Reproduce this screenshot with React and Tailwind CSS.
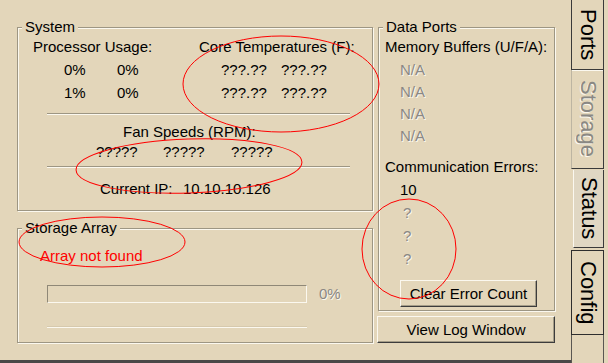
import React from "react";

const dim = "text-[#8a8884] [text-shadow:1px_1px_0_#fbf8ef]";

function Group({ title, className, children }) {
  return (
    <fieldset
      className={`border border-[#9d9683] shadow-[inset_1px_1px_0_#fbf8ef,1px_1px_0_#fbf8ef] ${className}`}
    >
      <legend className="ml-[4px] px-[3px] leading-[18px] bg-[#e3d6ba]">{title}</legend>
      {children}
    </fieldset>
  );
}

function Separator({ className }) {
  return <div className={`h-px bg-[#9d9683] shadow-[0_1px_0_#fbf8ef] ${className}`} />;
}

function Button({ children, className }) {
  return (
    <button
      type="button"
      className={`flex items-center justify-center border border-t-[#fbf8ef] border-l-[#fbf8ef] border-r-[#3c3c3c] border-b-[#3c3c3c] shadow-[inset_-1px_-1px_0_#a59d88] text-[15px] leading-none ${className}`}
    >
      {children}
    </button>
  );
}

export default function App() {
  const cpu = [
    ["0%", "0%"],
    ["1%", "0%"],
  ];
  const temps = [
    ["???.??", "???.??"],
    ["???.??", "???.??"],
  ];

  return (
    <div className="relative w-[608px] h-[363px] flex overflow-hidden bg-[#e3d6ba] text-black text-[15px] font-['Liberation_Sans',Arial,sans-serif]">
      {/* page */}
      <div className="w-[571px] h-full flex gap-[4px] pl-[17px] pt-[18px] border-b-[3px] border-[#4a4847]">
        {/* left column */}
        <div className="w-[356px] flex flex-col gap-[8px]">
          <Group title="System" className="h-[193px]">
            <div className="flex pl-[15px] leading-[22px]">
              <div className="w-[166px]">
                <div>Processor Usage:</div>
                {cpu.map((row, i) => (
                  <div key={i} className="flex pl-[31px] mt-px">
                    <span className="w-[53px]">{row[0]}</span>
                    <span>{row[1]}</span>
                  </div>
                ))}
              </div>
              <div>
                <div>Core Temperatures (F):</div>
                {temps.map((row, i) => (
                  <div key={i} className="flex pl-[22px] mt-px">
                    <span className="w-[60px]">{row[0]}</span>
                    <span>{row[1]}</span>
                  </div>
                ))}
              </div>
            </div>
            <Separator className="ml-[29px] w-[303px] mt-[9px]" />
            <div className="h-[19px] leading-[19px] mt-[8px] pl-[105px]">Fan Speeds (RPM):</div>
            <div className="flex leading-[22px] pl-[78px]">
              <span className="w-[67px]">?????</span>
              <span className="w-[68px]">?????</span>
              <span>?????</span>
            </div>
            <Separator className="ml-[29px] w-[303px] mt-[3px]" />
            <div className="flex leading-[22px] mt-[11px] pl-[82px]">
              <span className="w-[83px]">Current IP:</span>
              <span>10.10.10.126</span>
            </div>
          </Group>

          <Group title="Storage Array" className="h-[124px]">
            <div className="leading-[22px] mt-[8px] pl-[22px] text-[#ff0000]">Array not found</div>
            <div className="flex items-center mt-[18px] pl-[29px]">
              <div className="w-[260px] h-[18px] border border-t-[#8f8877] border-l-[#8f8877] border-b-[#fbf8ef] border-r-[#fbf8ef]" />
              <span className={`ml-[12px] leading-[18px] ${dim}`}>0%</span>
            </div>
            <div className="ml-[29px] mt-[24px] w-[260px] h-px bg-[#fbf8ef] shadow-[0_-1px_0_#d6c9ad]" />
          </Group>
        </div>

        {/* right column */}
        <div className="w-[178px] flex flex-col">
          <Group title="Data Ports" className="ml-[1px] w-[177px] h-[293px]">
            <div className="pl-[6px] leading-[22px]">
              <div>Memory Buffers (U/F/A):</div>
              {[0, 1, 2, 3].map((i) => (
                <div key={i} className={`pl-[15px] mt-px h-[21px] ${dim}`}>N/A</div>
              ))}
              <div className="mt-[10px]">Communication Errors:</div>
              <div className="pl-[15px] mt-px">10</div>
              {[0, 1, 2].map((i) => (
                <div key={i} className={`pl-[18px] h-[23px] leading-[23px] ${dim}`}>?</div>
              ))}
            </div>
            <Button className="ml-[21px] mt-[10px] w-[137px] h-[27px]">Clear Error Count</Button>
          </Group>
          <Button className="mt-[5px] w-[178px] h-[27px]">View Log Window</Button>
        </div>
      </div>

      {/* tabs */}
      <div className="w-[37px] h-full flex flex-col text-[22px] leading-none">
        <div className="w-[33px] h-[70px] flex items-center justify-center border-l border-r border-b border-[#3a3a3a] shadow-[0_1px_0_#fbf8ef]">
          <span className="[writing-mode:vertical-rl]">Ports</span>
        </div>
        <div className="w-[33px] h-[99px] flex items-center justify-center border-l border-l-[#bdb5a2] border-r border-b border-r-[#3a3a3a] border-b-[#3a3a3a]">
          <span className={`[writing-mode:vertical-rl] ${dim}`}>Storage</span>
        </div>
        <div className="ml-[2px] mt-[1px] w-[31px] h-[78px] flex items-center justify-center bg-[#e0d7c3] border-l border-l-[#fbf8ef] border-r border-b border-r-[#3a3a3a] border-b-[#3a3a3a]">
          <span className="[writing-mode:vertical-rl]">Status</span>
        </div>
        <div className="mt-[2px] w-[33px] h-[85px] flex items-center justify-center border border-[#2e2e2e]">
          <span className="[writing-mode:vertical-rl]">Config</span>
        </div>
        <div className="w-[33px] flex-1 border-l border-r border-[#5a5752]" />
      </div>

      {/* annotations */}
      <svg className="absolute inset-0 pointer-events-none" width="608" height="363" viewBox="0 0 608 363" fill="none" stroke="#ff0000" strokeWidth="1">
        <ellipse cx="281" cy="84" rx="98" ry="48" />
        <ellipse cx="189" cy="166" rx="113" ry="27" transform="rotate(-2 189 166)" />
        <ellipse cx="102" cy="242" rx="83" ry="25" />
        <ellipse cx="409" cy="249" rx="47" ry="50" />
      </svg>
    </div>
  );
}
